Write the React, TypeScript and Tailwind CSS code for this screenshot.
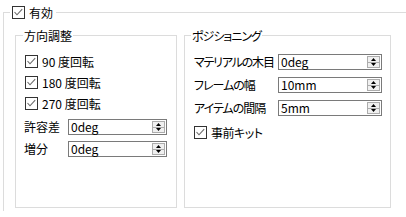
import React from "react";

const FONT = "font-['Noto_Sans_CJK_JP','Noto_Sans',sans-serif] [font-feature-settings:'palt']";

function Check({ checked = true }: { checked?: boolean }) {
  return (
    <span className="inline-flex w-[13px] h-[13px] shrink-0 border border-[#333333] bg-white">
      {checked && (
        <svg width="11" height="11" viewBox="0 0 11 11">
          <polyline points="1.5,5 4,7.8 9.2,2.2" fill="none" stroke="#6a6a6a" strokeWidth="1.1" />
        </svg>
      )}
    </span>
  );
}

function Spin({ value, width }: { value: string; width: string }) {
  return (
    <div className={`flex h-[16px] border border-[#7a7a7a] bg-white ${width}`}>
      <span className="flex-1 pl-[2px] text-[12px] leading-[14px] text-black">{value}</span>
      <div className="my-[1px] mr-[1px] flex w-[13px] flex-col border border-[#acacac] bg-[#f0f0f0]">
        <div className="flex flex-1 items-center justify-center border-b border-[#acacac]">
          <svg width="5" height="3" viewBox="0 0 5 3">
            <polygon points="2.5,0 5,3 0,3" fill="#000" />
          </svg>
        </div>
        <div className="flex flex-1 items-center justify-center">
          <svg width="5" height="3" viewBox="0 0 5 3">
            <polygon points="0,0 5,0 2.5,3" fill="#000" />
          </svg>
        </div>
      </div>
    </div>
  );
}

function Group({ title, titleCls, width, children }: { title: string; titleCls: string; width: string; children: React.ReactNode }) {
  return (
    <div className={`relative h-[173px] border border-[#dcdcdc] ${width}`}>
      <span className={`absolute -top-[8px] ${titleCls} bg-white px-[1px] text-[12px] leading-[15px] text-black`}>{title}</span>
      {children}
    </div>
  );
}

function CheckRow({ label }: { label: string }) {
  return (
    <div className="flex h-[13px] items-center gap-[4px]">
      <Check />
      <span className="text-[12px] leading-[13px] text-black">{label}</span>
    </div>
  );
}

function SpinRow({ label, labelCls, value, spinW }: { label: string; labelCls: string; value: string; spinW: string }) {
  return (
    <div className="flex items-center">
      <span className={`${labelCls} shrink-0 whitespace-nowrap text-[12px] leading-[16px] text-black`}>{label}</span>
      <Spin value={value} width={spinW} />
    </div>
  );
}

export default function App() {
  return (
    <div className={`h-[217px] w-[406px] overflow-hidden bg-white pl-[3px] pt-[12px] ${FONT}`}>
      <div className="relative h-[199px] w-[420px] border-l border-t border-[#dcdcdc] pl-[11px] pt-[22px]">
        <div className="absolute -top-[7px] left-[6px] flex h-[13px] items-center gap-[4px] bg-white pl-[2px] pr-[3px]">
          <Check />
          <span className="text-[12px] leading-[13px] text-black">有効</span>
        </div>

        <div className="flex gap-[7px]">
          <Group title="方向調整" titleCls="left-[7px]" width="w-[162px]">
            <div className="flex flex-col pl-[8px] pt-[19px]">
              <div className="ml-[1px] flex flex-col gap-[8px]">
                <CheckRow label="90 度回転" />
                <CheckRow label="180 度回転" />
                <CheckRow label="270 度回転" />
              </div>
              <div className="mt-[9px] flex flex-col gap-[6px]">
                <SpinRow label="許容差" labelCls="w-[44px]" value="0deg" spinW="w-[99px]" />
                <SpinRow label="増分" labelCls="w-[44px]" value="0deg" spinW="w-[99px]" />
              </div>
            </div>
          </Group>

          <Group title="ポジショニング" titleCls="left-[6px] tracking-[-1px]" width="w-[207px]">
            <div className="flex flex-col pl-[9px] pt-[18px]">
              <div className="flex flex-col gap-[7px]">
                <SpinRow label="マテリアルの木目" labelCls="w-[84px] tracking-[-1.2px]" value="0deg" spinW="w-[104px]" />
                <SpinRow label="フレームの幅" labelCls="w-[84px] tracking-[-1px]" value="10mm" spinW="w-[104px]" />
                <SpinRow label="アイテムの間隔" labelCls="w-[84px] tracking-[-1px]" value="5mm" spinW="w-[104px]" />
              </div>
              <div className="mt-[10px] tracking-[-0.5px]">
                <CheckRow label="事前キット" />
              </div>
            </div>
          </Group>
        </div>
      </div>
    </div>
  );
}
